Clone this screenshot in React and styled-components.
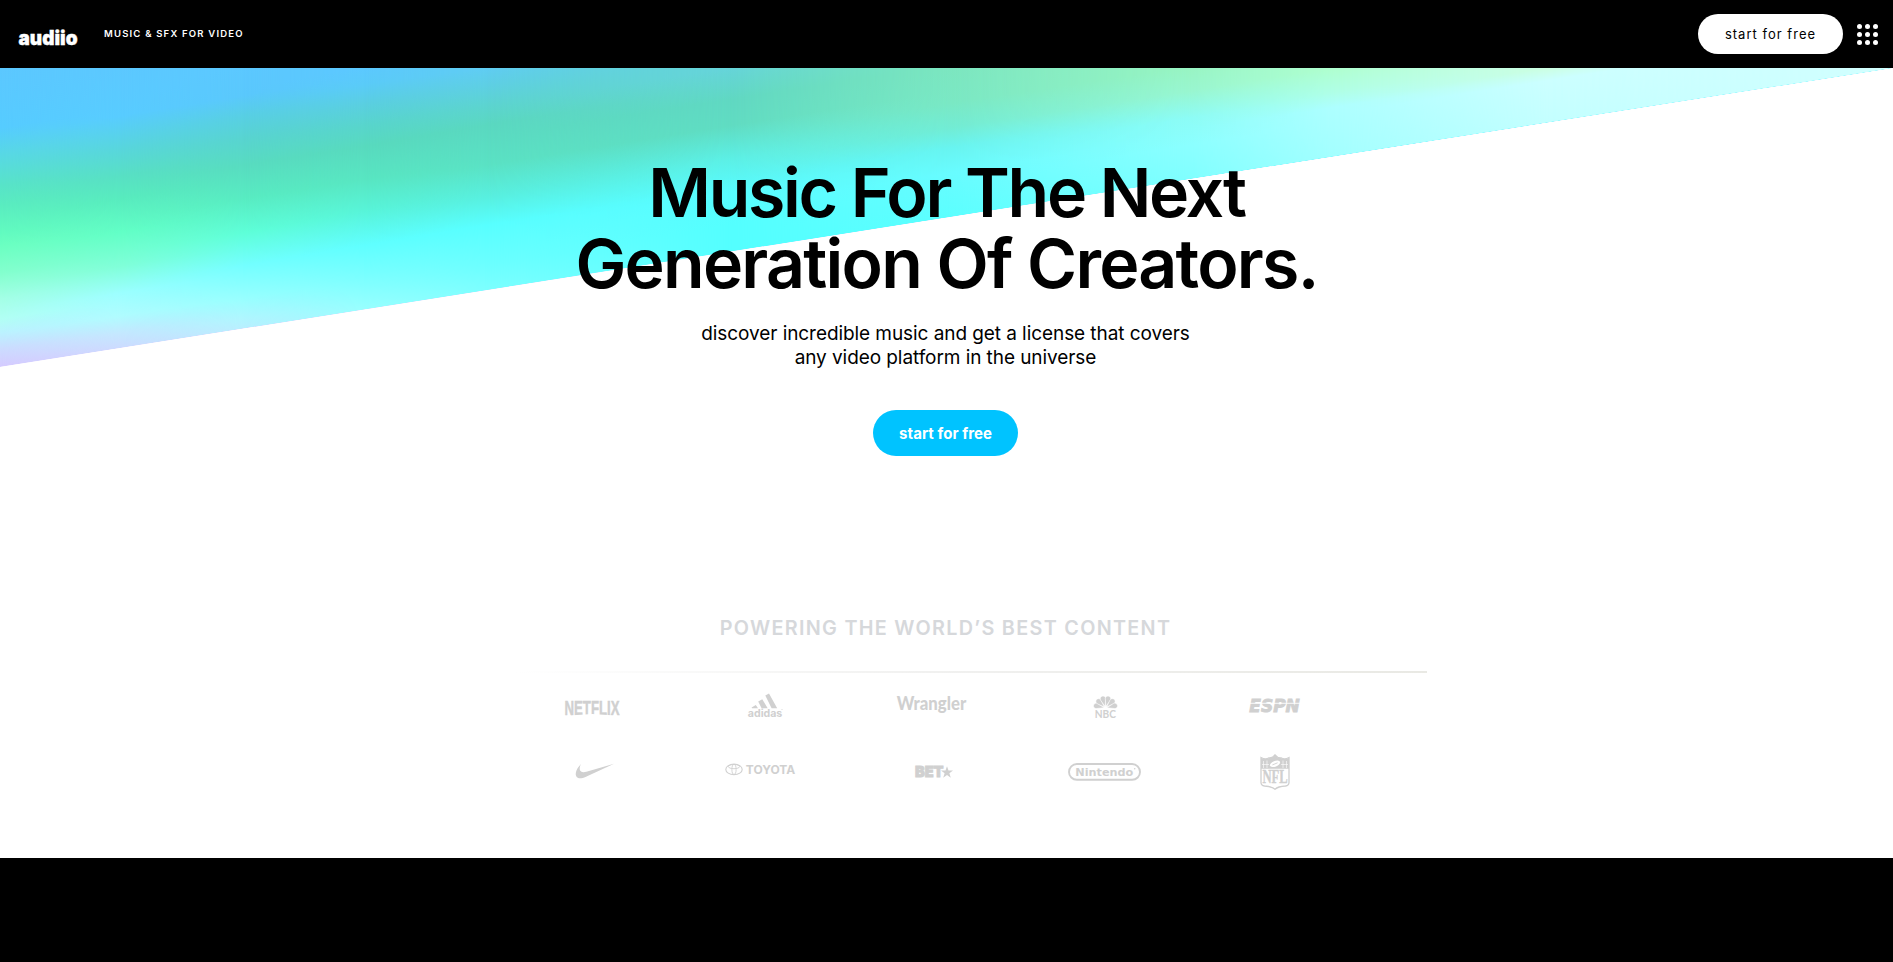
import React from 'react';
import styled, { createGlobalStyle } from 'styled-components';

const GlobalStyle = createGlobalStyle`
  * { box-sizing: border-box; }
  body {
    margin: 0;
    background: #000;
    color: #000;
    font-family: Inter, "Liberation Sans", sans-serif;
  }
  h1, h2, p { margin: 0; }
`;

const Page = styled.div`
  display: flex;
  flex-direction: column;
  width: 100%;
  height: 962px;
  overflow: hidden;
`;

/* ---------- navigation ---------- */

const NavBar = styled.header`
  flex: none;
  display: flex;
  align-items: center;
  height: 68px;
  padding: 0 15px 0 18px;
  background: #000;
  color: #fff;
`;

const Wordmark = styled.svg`
  display: block;
  width: 62px;
  height: 24px;
  margin-top: 8px;
  overflow: visible;
`;

const Tagline = styled.p`
  flex: 1;
  margin-left: 24px;
  font-size: 9.5px;
  font-weight: 600;
  line-height: 14px;
  letter-spacing: 1.2px;
`;

const Button = styled.button`
  display: flex;
  align-items: center;
  justify-content: center;
  border: 0;
  border-radius: 999px;
  padding: 0;
  font-family: inherit;
  white-space: nowrap;
`;

const NavButton = styled(Button)`
  width: 145px;
  height: 40px;
  background: #fff;
  color: #000;
  font-size: 13px;
  font-weight: 400;
  letter-spacing: 1.02px;
`;

const DotMenu = styled.div`
  display: grid;
  grid-template-columns: repeat(3, 5px);
  gap: 3px;
  margin-left: 14px;
`;

const Dot = styled.span`
  width: 5px;
  height: 5px;
  border-radius: 50%;
  background: #fff;
`;

/* ---------- hero ---------- */

const HeroSection = styled.section`
  position: relative;
  flex: none;
  height: 790px;
  overflow: hidden;
  background: #fff;
`;

const Slope = styled.div`
  position: absolute;
  inset: 0 0 auto 0;
  height: 299px;
  overflow: hidden;
  transform: skewY(-8.976deg);
  transform-origin: 0 0;
`;

const SlopeLayer = styled.div`
  position: absolute;
  inset: 0;
  background: linear-gradient(180deg, ${(p) => p.$stops});
  ${(p) =>
    p.$to > 0 &&
    `mask-image: linear-gradient(90deg, transparent ${p.$from}px, #000 ${p.$to}px);`}
`;

const HeroContent = styled.div`
  position: relative;
  display: flex;
  flex-direction: column;
  align-items: center;
  padding-top: 89px;
  text-align: center;
`;

const Headline = styled.h1`
  font-size: 68px;
  font-weight: 600;
  line-height: 71px;
`;

const HeadlineLine = styled.span`
  display: block;
  letter-spacing: ${(p) => p.$tracking}px;
`;

const Pitch = styled.div`
  display: flex;
  flex-direction: column;
  align-items: center;
  padding-right: 2px;
`;

const Lead = styled.p`
  width: 520px;
  margin-top: 23px;
  font-size: 19px;
  font-weight: 400;
  line-height: 24px;
  letter-spacing: -0.07px;
`;

const CtaButton = styled(Button)`
  width: 145px;
  height: 46px;
  margin-top: 40px;
  background: #00c3ff;
  color: #fff;
  font-size: 15px;
  font-weight: 700;
  letter-spacing: 0.04px;
`;

const Partners = styled.div`
  display: flex;
  flex-direction: column;
  align-items: center;
  width: 960px;
  margin-top: 160px;
`;

const PartnersTitle = styled.h2`
  color: #d6d8db;
  font-size: 19.8px;
  font-weight: 600;
  line-height: 24px;
  letter-spacing: 1.3px;
  padding-right: 2px;
`;

const Rule = styled.div`
  width: 100%;
  height: 2px;
  margin-top: 31px;
  background: linear-gradient(90deg, #fff 5%, #f1f1f0 48%, #e9e9e4);
`;

const LogoGrid = styled.div`
  display: grid;
  grid-template-columns: repeat(5, 171px);
  row-gap: 15px;
  justify-items: center;
  align-self: flex-start;
  margin: 8px 0 0 40px;
`;

const Logo = styled.svg`
  display: block;
  width: 101px;
  height: 50px;
  fill: #d0d0d0;
`;

const FooterBand = styled.footer`
  flex: 1;
  background: #000;
`;

/* Vertical colour ramps, one per horizontal position, blended left to right. */
const ramps = [
  [0, '#5cc8ff 0, #56ccff 60px, #58d8e6 85px, #58e4c8 118px, #5aedc0 138px, #62fbc0 165px, #6cffc2 178px, #84ffce 205px, #a4ffe6 231px, #b2fff4 251px, #bcf2ff 265px, #ccdcff 281px, #d5ccff 298px'],
  [120, '#5cc8ff 19px, #58ccff 67px, #58d6dc 100px, #58e0c4 127px, #58ecbe 150px, #62ffc6 183px, #80ffd8 217px, #9cffff 244px, #b0fcff 267px, #c4e8ff 284px, #ccdcff 298px'],
  [243, '#5cc8ff 38px, #5ac8fc 66px, #58cfe4 86px, #58d4d0 109px, #58dcc0 136px, #58ecc2 169px, #5effd8 203px, #74ffff 236px, #98ffff 269px, #b0f6ff 289px, #b8f0ff 298px'],
  [364, '#5cc8ff 57px, #5acbf8 74px, #5acfe0 94px, #58d5cc 115px, #58dabe 136px, #58e6c2 169px, #58f4d8 200px, #60ffff 235px, #78ffff 264px, #98ffff 298px'],
  [485, '#60ccf4 76px, #5ecfe4 94px, #5cd4d0 114px, #5ad8c0 134px, #5ae2c4 174px, #58f0e0 207px, #58ffff 234px, #6cffff 274px, #7cffff 298px'],
  [728, '#66d4da 115px, #60d8c2 147px, #60dcc2 173px, #5cf0e6 207px, #58fcff 240px, #54ffff 273px, #54ffff 298px'],
  [950, '#7ce6c0 150px, #7ae8c4 185px, #72ecd4 210px, #68f4f0 230px, #68fcff 255px, #5cffff 298px'],
  [1185, '#98f4c2 186px, #98f6d0 211px, #8cfcf6 238px, #8affff 265px, #80ffff 298px'],
  [1337, '#b0ffce 210px, #b0ffe6 235px, #aeffff 250px, #a4ffff 298px'],
  [1550, '#ccffe0 244px, #ccffff 257px, #c4ffff 298px'],
  [1893, '#d2ffff 290px, #d2ffff 298px'],
];

const petals = [-77, -46, -15.5, 15.5, 46, 77];

function LogoText({ children, width, weight = 700, ...rest }) {
  return (
    <text textLength={width} lengthAdjust="spacingAndGlyphs" fontWeight={weight} fontFamily="Liberation Sans, sans-serif" {...rest}>
      {children}
    </text>
  );
}

export default function App() {
  return (
    <Page>
      <GlobalStyle />
      <NavBar>
        <Wordmark viewBox="0 0 62 24" role="img" aria-label="audiio">
          <text x="0.5" y="19.3" fontSize="20" fontWeight="900" fontFamily="Inter, sans-serif" fill="#fff" stroke="#fff" strokeWidth="0.4" textLength="59" lengthAdjust="spacingAndGlyphs">
            audiio
          </text>
        </Wordmark>
        <Tagline>MUSIC &amp; SFX FOR VIDEO</Tagline>
        <NavButton>start for free</NavButton>
        <DotMenu>
          {Array.from({ length: 9 }, (_, i) => (
            <Dot key={i} />
          ))}
        </DotMenu>
      </NavBar>

      <HeroSection>
        <Slope>
          {ramps.map(([x, stops], i) => (
            <SlopeLayer key={x} $stops={stops} $from={i ? ramps[i - 1][0] : 0} $to={x} />
          ))}
        </Slope>
        <HeroContent>
          <Headline>
            <HeadlineLine $tracking={-2.28}>Music For The Next</HeadlineLine>
            <HeadlineLine $tracking={-1.75}>Generation Of Creators.</HeadlineLine>
          </Headline>
          <Pitch>
            <Lead>
              discover incredible music and get a license that covers
              <br />
              any video platform in the universe
            </Lead>
            <CtaButton>start for free</CtaButton>
          </Pitch>
          <Partners>
            <PartnersTitle>POWERING THE WORLD’S BEST CONTENT</PartnersTitle>
            <Rule />
            <LogoGrid>
              <Logo viewBox="0 0 101 50">
                <LogoText x="22.5" y="33.8" fontSize="21" width="55" stroke="#d0d0d0" strokeWidth="0.5">NETFLIX</LogoText>
                <path d="M20 36.5 Q50 29.5 81 36.5Z" fill="#fff" />
              </Logo>
              <Logo viewBox="0 0 101 50">
                <path d="M52.3 14.6 56 12.5 64.2 27.3H58.6ZM45.2 20.6 49.3 18.3 54.7 27.3H48.6ZM38.6 26.4 42.8 24 45 27.3H39Z" />
                <LogoText x="34.8" y="35.7" fontSize="10" width="34.5" fontFamily="Inter, sans-serif">adidas</LogoText>
                <circle cx="69" cy="28.5" r="0.5" />
              </Logo>
              <Logo viewBox="0 0 101 50">
                <LogoText x="12.7" y="29" fontSize="18" width="69.5" weight="900" fontFamily="Lato, sans-serif">Wrangler</LogoText>
              </Logo>
              <Logo viewBox="0 0 101 50">
                {petals.map((a) => (
                  <path key={a} d="M0-1.5 L-2.7-9 A2.75 2.75 0 1 1 2.7-9Z" transform={`translate(50.5 27) rotate(${a})`} stroke="#fff" strokeWidth="0.5" />
                ))}
                <LogoText x="39.8" y="36.8" fontSize="10.6" width="21.2" fontFamily="Lato, sans-serif">NBC</LogoText>
              </Logo>
              <Logo viewBox="0 0 101 50">
                <LogoText x="23.3" y="30.7" fontSize="17.4" width="50.5" fontStyle="italic" fontFamily="DejaVu Sans, sans-serif" stroke="#d0d0d0" strokeWidth="0.9">ESPN</LogoText>
                <rect x="22" y="21.8" width="54" height="0.9" fill="#fff" />
              </Logo>
              <Logo viewBox="0 0 101 50">
                <path
                  transform="translate(33.7 4.1) scale(1.6 1.74)"
                  d="M24 7.8L6.442 15.276c-1.456.616-2.679.925-3.668.925-1.12 0-1.933-.392-2.437-1.177-.317-.504-.41-1.143-.28-1.918.13-.775.476-1.6 1.036-2.478.467-.71 1.232-1.643 2.297-2.8a6.122 6.122 0 00-.784 1.848c-.28 1.195-.028 2.072.756 2.632.373.261.886.392 1.54.392.522 0 1.11-.084 1.764-.252L24 7.8z"
                />
              </Logo>
              <Logo viewBox="0 0 101 50">
                <g fill="none" stroke="#d0d0d0">
                  <ellipse cx="21" cy="23.4" rx="8.2" ry="5.3" strokeWidth="1.1" />
                  <ellipse cx="21" cy="20.6" rx="5.6" ry="2.1" strokeWidth="0.9" />
                  <ellipse cx="21" cy="23.4" rx="2.1" ry="5" strokeWidth="0.9" />
                </g>
                <LogoText x="32.8" y="27.8" fontSize="11.8" width="49.4" fontFamily="Inter, sans-serif">TOYOTA</LogoText>
              </Logo>
              <Logo viewBox="0 0 101 50">
                <LogoText x="31" y="31.2" fontSize="14.8" width="28.5" weight="900" fontFamily="Inter, sans-serif" stroke="#d0d0d0" strokeWidth="0.9">BET</LogoText>
                <path d="M63 20.2 64.5 24.6H69L65.4 27.3 66.8 31.7 63 29 59.2 31.7 60.6 27.3 57 24.6H61.5Z" />
              </Logo>
              <Logo viewBox="0 0 101 50">
                <rect x="14" y="18" width="71" height="15.8" rx="7.9" fill="none" stroke="#d0d0d0" strokeWidth="1.9" />
                <LogoText x="20.3" y="30" fontSize="10.8" width="58" fontFamily="DejaVu Sans, sans-serif">Nintendo</LogoText>
                <circle cx="79.7" cy="22.7" r="0.8" />
              </Logo>
              <Logo viewBox="0 0 101 50">
                <path
                  d="M35 11.5 Q39.5 14 43 11.8 Q46.5 12 49 8.8 Q51.5 12 55 11.8 Q58.5 14 63 11.5 V36.5 Q63 39.5 59.5 40 Q52 40.5 49 43.2 Q46 40.5 38.5 40 Q35 39.5 35 36.5Z"
                  fill="none"
                  stroke="#d0d0d0"
                  strokeWidth="1.3"
                />
                <path d="M35 12 Q39.5 14 43 12 Q46.5 12 49 9.4 Q51.5 12 55 12 Q58.5 14 63 12 V22.8 H35Z" />
                <path d="M37.5 15V22M41 14.5V22M57 14.5V22M60.5 15V22M36 18.5H43M55 18.5H62" stroke="#fff" strokeWidth="0.6" />
                <ellipse cx="49" cy="17.8" rx="5.4" ry="2.8" transform="rotate(-22 49 17.8)" fill="#fff" />
                <path d="M46.4 18.9 51.6 16.8" stroke="#d0d0d0" strokeWidth="0.9" />
                <LogoText x="36.4" y="37.4" fontSize="19" width="25.2" fontFamily="Liberation Serif, serif" stroke="#d0d0d0" strokeWidth="0.4">NFL</LogoText>
              </Logo>
            </LogoGrid>
          </Partners>
        </HeroContent>
      </HeroSection>
      <FooterBand />
    </Page>
  );
}
